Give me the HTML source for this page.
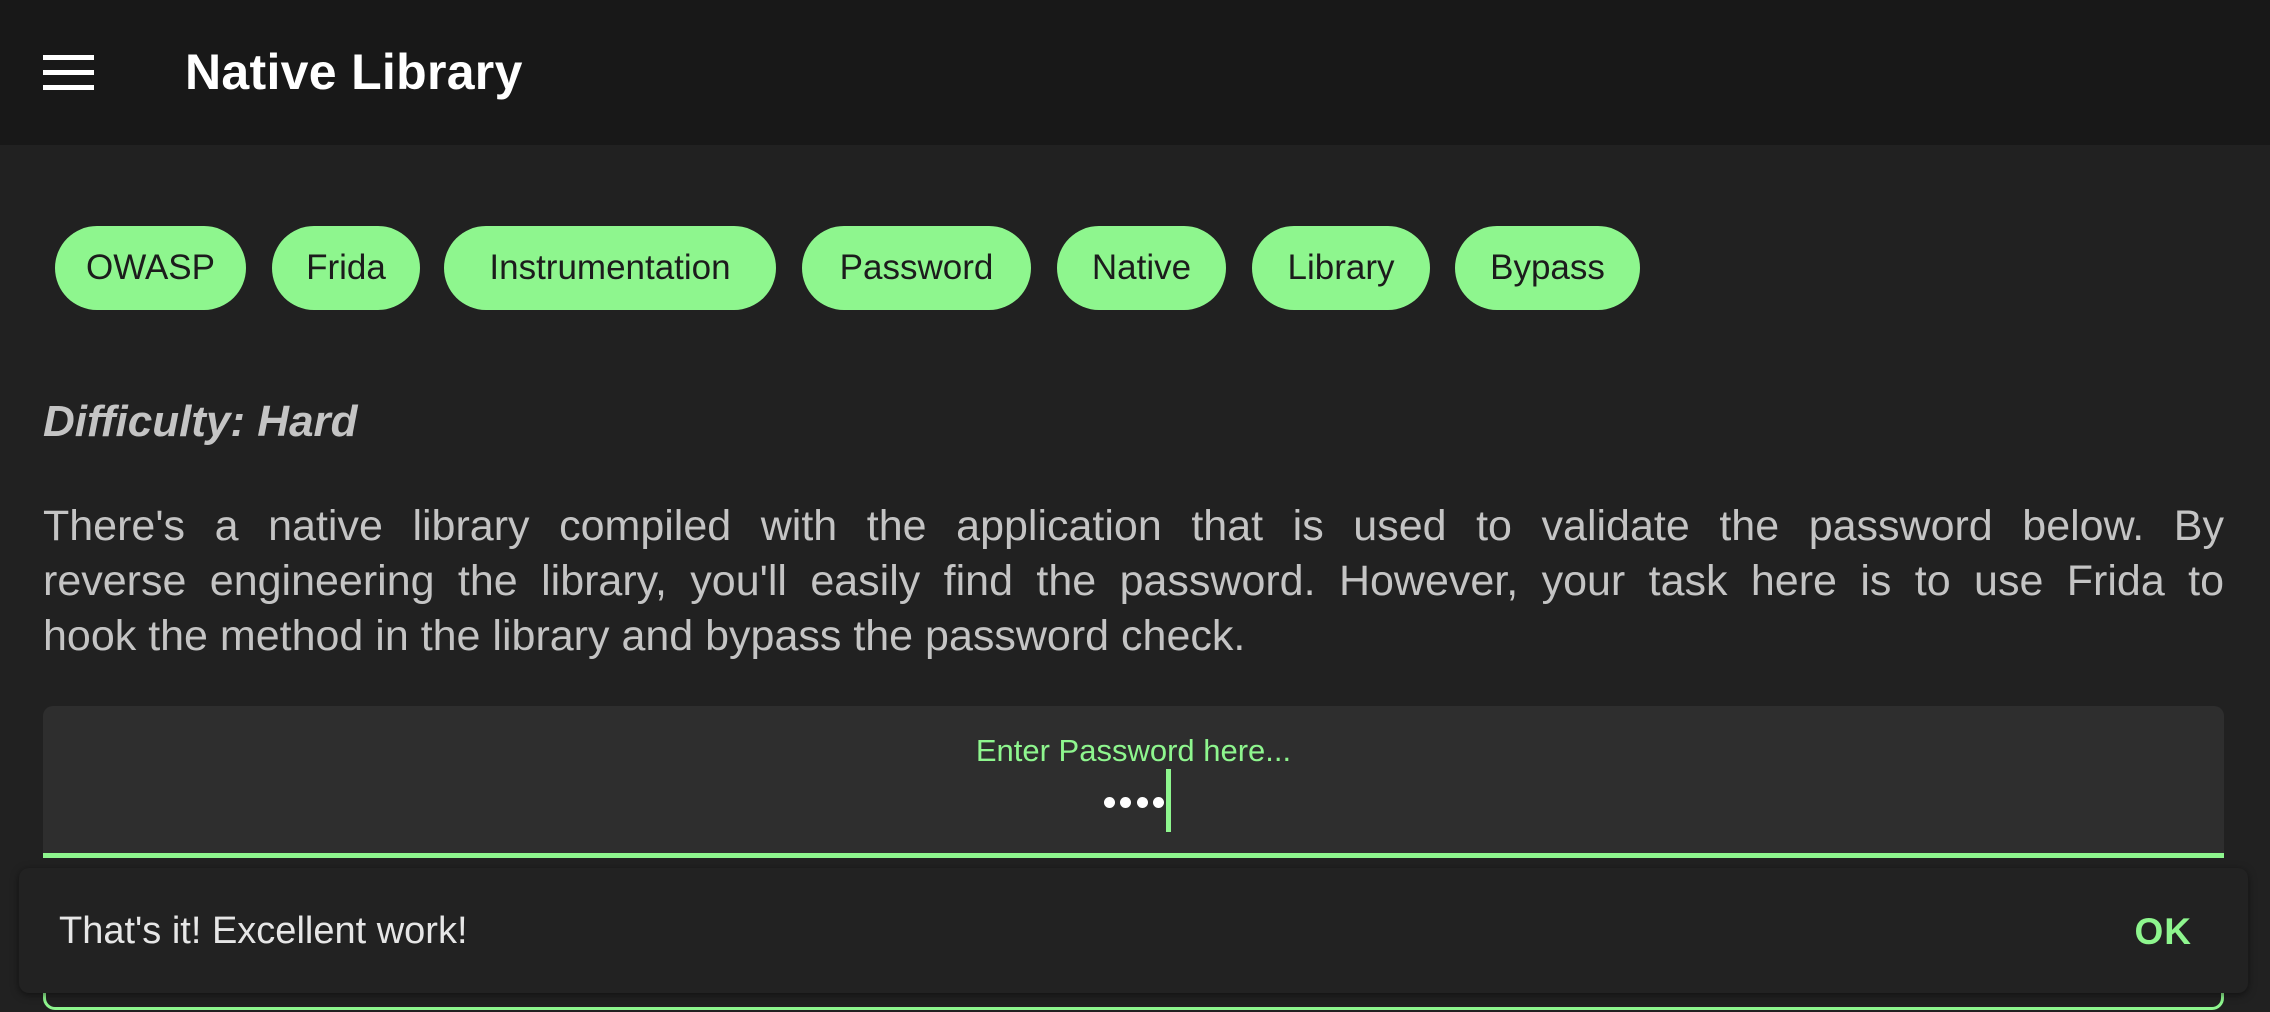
<!DOCTYPE html>
<html><head><meta charset="utf-8"><style>
*{margin:0;padding:0;box-sizing:border-box}
body{width:2270px;height:1012px;overflow:hidden;background:#212121;font-family:"Liberation Sans",sans-serif;position:relative}
.hdr{position:absolute;left:0;top:0;width:2270px;height:145px;background:#181818}
.ham{position:absolute;left:43px;width:51px;height:5px;background:#fff}
.title{position:absolute;left:185px;top:43px;font-size:50px;color:#fff;font-weight:bold;letter-spacing:0.3px}
.chip{position:absolute;top:226px;height:84px;border-radius:42px;background:#8ef68e;color:#1c1c1c;font-size:35px;line-height:84px;text-align:center}
.diff{position:absolute;left:43px;top:397px;font-size:44px;font-weight:bold;font-style:italic;color:#c4c4c4}
.para{position:absolute;left:43px;top:499px;width:2181px;font-size:43px;line-height:55px;color:#c4c4c4}
.para div{text-align:justify;text-align-last:justify;white-space:nowrap}
.para div.l{text-align-last:left}
.inp{position:absolute;left:43px;top:706px;width:2181px;height:152px;background:#2e2e2e;border-radius:10px 10px 0 0;border-bottom:5px solid #8ef68e}
.lbl{position:absolute;left:0;width:100%;top:27px;text-align:center;color:#8ef68e;font-size:31px}
.dot{position:absolute;top:797px;width:11px;height:11px;border-radius:50%;background:#fff}
.cur{position:absolute;left:1166px;top:769px;width:5px;height:63px;background:#8ef68e}
.btn{position:absolute;left:43px;top:960px;width:2181px;height:50px;border:3px solid #8ef68e;border-top:none;border-radius:0 0 12px 12px}
.snack{position:absolute;left:19px;top:868px;width:2229px;height:125px;background:#222;border-radius:10px;box-shadow:0 2px 8px rgba(0,0,0,.5)}
.msg{position:absolute;left:40px;top:42px;font-size:38px;color:#e6e6e6}
.ok{position:absolute;right:56px;top:43px;font-size:37px;color:#8ef68e;font-weight:bold;letter-spacing:1px}
</style></head><body>
<div class="hdr">
<div class="ham" style="top:55px"></div><div class="ham" style="top:70px"></div><div class="ham" style="top:85px"></div>
<div class="title">Native Library</div>
</div>
<div class="chip" style="left:55px;width:191px">OWASP</div>
<div class="chip" style="left:272px;width:148px">Frida</div>
<div class="chip" style="left:444px;width:332px">Instrumentation</div>
<div class="chip" style="left:802px;width:229px">Password</div>
<div class="chip" style="left:1057px;width:169px">Native</div>
<div class="chip" style="left:1252px;width:178px">Library</div>
<div class="chip" style="left:1455px;width:185px">Bypass</div>
<div class="diff">Difficulty: Hard</div>
<div class="para">
<div>There's a native library compiled with the application that is used to validate the password below. By</div>
<div>reverse engineering the library, you'll easily find the password. However, your task here is to use Frida to</div>
<div class="l">hook the method in the library and bypass the password check.</div>
</div>
<div class="inp"><div class="lbl">Enter Password here...</div></div>
<div class="dot" style="left:1104px"></div><div class="dot" style="left:1120px"></div><div class="dot" style="left:1137px"></div><div class="dot" style="left:1153px"></div>
<div class="cur"></div>
<div class="btn"></div>
<div class="snack"><div class="msg">That's it! Excellent work!</div><div class="ok">OK</div></div>
</body></html>
